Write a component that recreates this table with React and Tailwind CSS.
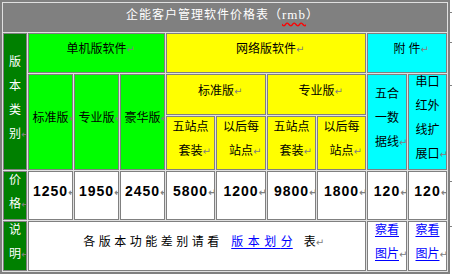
import React from 'react';

// Word paragraph mark, kept out of the centring
const Mark = () => (
  <span className="inline-block w-[8px] -mr-[8px] text-left text-[10px] leading-none text-[#808080] font-['DejaVu_Sans',sans-serif] tracking-normal">
    ↵
  </span>
);

const Cell = ({ className = '', children }) => (
  <div className={`border border-[#808080] overflow-hidden flex items-center justify-center pb-[10px] text-center leading-[24px] whitespace-nowrap ${className}`}>
    <div>{children}</div>
  </div>
);

const prices = [
  { value: '1250', pos: 'col-start-2' },
  { value: '1950', pos: 'col-start-3' },
  { value: '2450', pos: 'col-start-4' },
  { value: '5800', pos: 'col-start-5' },
  { value: '1200', pos: 'col-start-6' },
  { value: '9800', pos: 'col-start-7' },
  { value: '1800', pos: 'col-start-8' },
  { value: '120', pos: 'col-start-9' },
  { value: '120', pos: 'col-start-10' },
];

const rowMarks = ['mt-[12px]', 'mt-[29px]', 'mt-[42px]', 'mt-[95px]', 'mt-[44px]'];

const App = () => {
  return (
    <div className="flex items-start bg-white w-[452px] h-[276px] font-['Noto_Sans_CJK_SC',sans-serif] text-[12px] text-black">
      <div className="w-[450px] h-[274px] border-2 border-[#808080] bg-[#e0e0e0] p-px">
        <div className="grid grid-cols-[24px_45px_45px_45px_49px_50px_49px_49px_40px_39px] grid-rows-[29px_40px_41px_54px_49px_50px] gap-px">
          {/* title */}
          <div className="col-start-1 col-span-10 row-start-1 border border-[#808080] bg-[#808080] flex items-center justify-center pb-[7px] pr-[5px] leading-[24px] text-white tracking-[1px] whitespace-nowrap">
            <span>
              企能客户管理软件价格表（
              <span className="font-['Liberation_Serif',serif] text-[13px] underline decoration-wavy decoration-[#ff0000] underline-offset-[3px]">rmb</span>
              ）
            </span>
          </div>

          {/* side labels */}
          <Cell className="col-start-1 row-start-2 row-span-3 bg-[#008000] text-white">
            版<br />本<br />类<br />别<Mark />
          </Cell>
          <Cell className="col-start-1 row-start-5 bg-[#008000] text-white">
            价<br />格<Mark />
          </Cell>
          <Cell className="col-start-1 row-start-6 bg-[#008000] text-white">
            说<br />明<Mark />
          </Cell>

          {/* group headers */}
          <Cell className="col-start-2 col-span-3 row-start-2 bg-[#00ff00]">
            单机版软件<Mark />
          </Cell>
          <Cell className="col-start-5 col-span-4 row-start-2 bg-[#ffff00]">
            网络版软件<Mark />
          </Cell>
          <Cell className="col-start-9 col-span-2 row-start-2 bg-[#00ffff]">
            附<span className="inline-block w-[3px]" />件<Mark />
          </Cell>

          {/* single machine editions */}
          <Cell className="col-start-2 row-start-3 row-span-2 bg-[#00ff00]">
            标准版<Mark />
          </Cell>
          <Cell className="col-start-3 row-start-3 row-span-2 bg-[#00ff00]">
            专业版<Mark />
          </Cell>
          <Cell className="col-start-4 row-start-3 row-span-2 bg-[#00ff00]">
            豪华版<Mark />
          </Cell>

          {/* network editions */}
          <Cell className="col-start-5 col-span-2 row-start-3 bg-[#ffff00]">
            标准版<Mark />
          </Cell>
          <Cell className="col-start-7 col-span-2 row-start-3 bg-[#ffff00]">
            专业版<Mark />
          </Cell>
          <Cell className="col-start-5 row-start-4 bg-[#ffff00]">
            五站点<br />套装<Mark />
          </Cell>
          <Cell className="col-start-6 row-start-4 bg-[#ffff00]">
            以后每<br />站点<Mark />
          </Cell>
          <Cell className="col-start-7 row-start-4 bg-[#ffff00]">
            五站点<br />套装<Mark />
          </Cell>
          <Cell className="col-start-8 row-start-4 bg-[#ffff00]">
            以后每<br />站点<Mark />
          </Cell>

          {/* accessories */}
          <Cell className="col-start-9 row-start-3 row-span-2 bg-[#00ffff]">
            五合<br />一数<br />据线<Mark />
          </Cell>
          <Cell className="col-start-10 row-start-3 row-span-2 bg-[#00ffff]">
            串口<br />红外<br />线扩<br />展口<Mark />
          </Cell>

          {/* prices */}
          {prices.map((p, i) => (
            <Cell key={i} className={`${p.pos} row-start-5 bg-white font-['Liberation_Sans',sans-serif] text-[14px] font-bold tracking-[1px]`}>
              {p.value}<Mark />
            </Cell>
          ))}

          {/* notes */}
          <Cell className="col-start-2 col-span-7 row-start-6 bg-white pl-[5px]">
            <span className="tracking-[3.5px]">各版本功能差别请</span>看
            <a href="#" className="ml-[12px] text-[#0000ff] underline underline-offset-[2px]">
              <span className="tracking-[4.5px]">版本划</span>分
            </a>
            <span className="ml-[11px]">表</span>
            <Mark />
          </Cell>
          <Cell className="col-start-9 row-start-6 bg-white">
            <a href="#" className="text-[#0000ff] underline underline-offset-[2px]">察看<br />图片</a>
            <Mark />
          </Cell>
          <Cell className="col-start-10 row-start-6 bg-white">
            <a href="#" className="text-[#0000ff] underline underline-offset-[2px]">察看<br />图片</a>
            <Mark />
          </Cell>
        </div>
      </div>

      {/* row-end marks beside the table */}
      <div className="flex flex-col w-[2px]">
        {rowMarks.map((m, i) => (
          <div key={i} className={`${m} h-px w-[2px] bg-[#808080]`} />
        ))}
      </div>
    </div>
  );
};

export default App;
